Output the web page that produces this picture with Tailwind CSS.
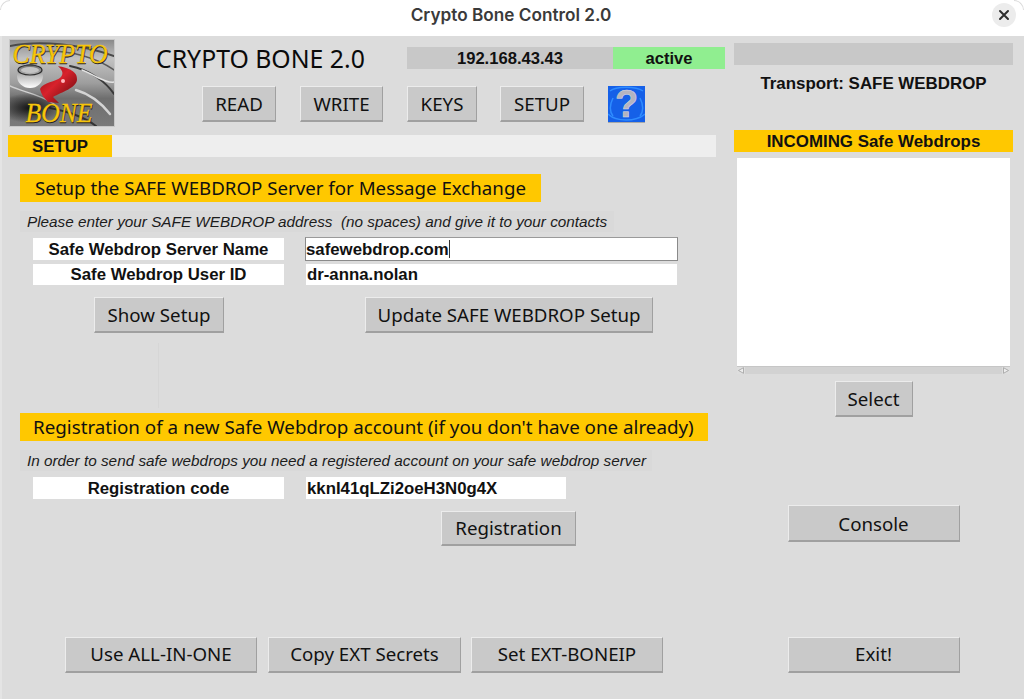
<!DOCTYPE html>
<html><head><meta charset="utf-8"><script src="https://cdn.jsdelivr.net/npm/@tailwindcss/browser@4"></script></head>
<body class="bg-white">
<div class="w-[1024px] h-[699px] overflow-hidden flex flex-col font-['Liberation_Sans',sans-serif] text-[#111]">
  <header class="h-[36px] shrink-0 relative flex items-center justify-center bg-white">
    <div class="absolute left-0 top-0 w-[10px] h-[10px] rounded-tl-[10px] border-t border-l border-[#dcdcdc]"></div>
    <div class="absolute right-0 top-0 w-[10px] h-[10px] rounded-tr-[10px] border-t border-r border-[#dcdcdc]"></div>
    <span class="font-['Inter',sans-serif] font-semibold text-[17.2px] text-[#3a3a3a] mt-[-6px] ml-[-2px]">Crypto Bone Control 2.0</span>
    <div class="absolute left-[992px] top-[3px] w-[24px] h-[24px] rounded-full bg-[#ececec] flex items-center justify-center">
      <svg width="12" height="12" viewBox="0 0 12 12"><path d="M2 2L10 10M10 2L2 10" stroke="#2e2e2e" stroke-width="2" stroke-linecap="round"/></svg>
    </div>
  </header>
  <main class="flex-1 flex bg-[#dcdcdc] border-l-2 border-[#e4e4e4]">
    <section class="w-[732px] shrink-0 relative">
      <div class="flex h-[91px] pl-[7px] pt-[3px]">
        <svg class="shrink-0 border border-[#c8c8c8]" width="106" height="88" viewBox="0 0 104 86" preserveAspectRatio="none">
          <defs>
            <linearGradient id="bg" x1="0" y1="0" x2="0" y2="1"><stop offset="0" stop-color="#8a8a8a"/><stop offset="0.22" stop-color="#c2c2c2"/><stop offset="0.5" stop-color="#9e9e9e"/><stop offset="0.68" stop-color="#6e6e6e"/><stop offset="1" stop-color="#7a7a7a"/></linearGradient>
            <linearGradient id="rib" x1="0" y1="0" x2="1" y2="1"><stop offset="0" stop-color="#8a0c12"/><stop offset="0.45" stop-color="#d8222c"/><stop offset="1" stop-color="#5a0608"/></linearGradient>
            <radialGradient id="dk" cx="0.5" cy="0.5" r="0.5"><stop offset="0" stop-color="#111"/><stop offset="1" stop-color="#111" stop-opacity="0"/></radialGradient>
            <linearGradient id="drop" x1="0" y1="0" x2="0" y2="1"><stop offset="0" stop-color="#666"/><stop offset="0.5" stop-color="#bdbdbd"/><stop offset="1" stop-color="#ffffff"/></linearGradient>
          </defs>
          <rect width="104" height="86" fill="url(#bg)"/>
          <g fill="none" stroke-linecap="round">
            <path d="M0 6C30 0 70 4 104 16" stroke="#4a4a4a" stroke-width="2"/>
            <path d="M30 12C60 8 90 20 104 30" stroke="#5a5a5a" stroke-width="1.5"/>
            <path d="M60 26C80 30 96 42 104 54" stroke="#3a3a3a" stroke-width="2"/>
            <path d="M72 30C86 36 98 44 104 42" stroke="#e2e2e2" stroke-width="1.5"/>
            <path d="M66 50C80 54 92 64 100 74" stroke="#d4d4d4" stroke-width="2.5"/>
            <path d="M40 68C60 72 76 78 86 86" stroke="#333" stroke-width="2"/>
            <path d="M0 46C12 52 30 54 44 64" stroke="#d0d0d0" stroke-width="1.5"/>
          </g>
          <ellipse cx="20" cy="68" rx="32" ry="15" fill="url(#dk)"/>
          <ellipse cx="20" cy="36" rx="13" ry="12" fill="url(#drop)"/>
          <ellipse cx="20" cy="30" rx="12" ry="5" fill="none" stroke="#2e2e2e" stroke-width="1.2"/>
          <ellipse cx="20" cy="30" rx="9" ry="3" fill="#c4c4c4"/>
          <path d="M48 26C58 28 68 31 67 40C66 48 52 52 43 57L49 63L38 62C34 58 31 54 30 49C33 42 46 42 51 37C54 33 52 30 48 26Z" fill="url(#rib)"/>
          <circle cx="53" cy="41" r="2" fill="#ffb9bd"/>
          <text x="50.5" y="24" text-anchor="middle" font-family="Liberation Serif" font-style="italic" font-size="27" textLength="95" lengthAdjust="spacingAndGlyphs" fill="#222" stroke="#222" stroke-width="0.4">CRYPTO</text>
          <text x="50" y="23" text-anchor="middle" font-family="Liberation Serif" font-style="italic" font-size="27" textLength="95" lengthAdjust="spacingAndGlyphs" fill="#f6c50a" stroke="#f6c50a" stroke-width="0.3">CRYPTO</text>
          <text x="49.5" y="82.5" text-anchor="middle" font-family="Liberation Serif" font-style="italic" font-size="27" textLength="67" lengthAdjust="spacingAndGlyphs" fill="#222" stroke="#222" stroke-width="0.4">BONE</text>
          <text x="49" y="81.5" text-anchor="middle" font-family="Liberation Serif" font-style="italic" font-size="27" textLength="67" lengthAdjust="spacingAndGlyphs" fill="#f6c50a" stroke="#f6c50a" stroke-width="0.3">BONE</text>
        </svg>
        <div class="pt-[8px]">
          <div class="flex items-center h-[22px]">
            <h1 class="w-[292px] pl-[41px] mt-[-1px] font-['Noto_Sans',sans-serif] text-[24.8px] leading-[22px] text-[#0a0a0a] whitespace-nowrap">CRYPTO BONE 2.0</h1>
            <div class="w-[206px] h-[22px] pt-[2px] bg-[#c8c8c8] flex items-center justify-center font-bold text-[16.6px]">192.168.43.43</div>
            <div class="w-[112px] h-[22px] pt-[2px] bg-[#90ee90] flex items-center justify-center font-bold text-[16.6px]">active</div>
          </div>
          <div class="flex mt-[17px] ml-[87px] font-['Noto_Sans',sans-serif] text-[18.7px]">
            <button class="w-[74px] h-[36px] pt-px bg-[#c9c9c9] border-t border-l border-t-[#ececec] border-l-[#ececec] border-r border-b-2 border-r-[#a0a0a0] border-b-[#a0a0a0]">READ</button>
            <button class="w-[83px] h-[36px] pt-px ml-[24px] bg-[#c9c9c9] border-t border-l border-t-[#ececec] border-l-[#ececec] border-r border-b-2 border-r-[#a0a0a0] border-b-[#a0a0a0]">WRITE</button>
            <button class="w-[70px] h-[36px] pt-px ml-[24px] bg-[#c9c9c9] border-t border-l border-t-[#ececec] border-l-[#ececec] border-r border-b-2 border-r-[#a0a0a0] border-b-[#a0a0a0]">KEYS</button>
            <button class="w-[84px] h-[36px] pt-px ml-[23px] bg-[#c9c9c9] border-t border-l border-t-[#ececec] border-l-[#ececec] border-r border-b-2 border-r-[#a0a0a0] border-b-[#a0a0a0]">SETUP</button>
            <div class="relative ml-[24px] w-[37px] h-[37px] shrink-0 bg-[#1560e8] border-b border-[#a8a8a8] flex items-center justify-center font-['Liberation_Sans',sans-serif] font-bold text-[38px] leading-[36px] text-[#b4b4c0] [-webkit-text-stroke:0.5px_#dcdce6]">
              <svg class="absolute inset-0" width="37" height="36" viewBox="0 0 37 36">
                <g fill="none" stroke="#2f8cff" stroke-width="1.5">
                  <path d="M0 28C8 36 28 36 37 28"/><path d="M2 5C8 0 28 0 35 5"/><path d="M32 12C36 20 35 26 32 30"/><path d="M5 12C1 20 2 26 5 30"/>
                </g>
              </svg>
              <span class="relative">?</span>
            </div>
          </div>
        </div>
      </div>
      <div class="mt-[8px] ml-[6px] w-[708px] h-[22px] bg-[#eeeeee] flex">
        <div class="w-[104px] pt-[2px] bg-[#ffc800] flex items-center justify-center font-bold text-[16.8px]">SETUP</div>
      </div>
      <div class="ml-[18px] mt-[17px] w-[521px] h-[28px] bg-[#ffc800] pl-[15px] flex items-center font-['Noto_Sans',sans-serif] text-[18.7px] whitespace-nowrap">Setup the SAFE WEBDROP Server for Message Exchange</div>
      <div class="ml-[18px] mt-[9px] w-[594px] h-[21px] pt-[2px] bg-[#d9d9d9] pl-[7px] flex items-center italic text-[15.3px] text-[#1c1c1c] whitespace-pre">Please enter your SAFE WEBDROP address  (no spaces) and give it to your contacts</div>
      <div class="flex mt-[5px] ml-[31px] h-[24px] items-center">
        <div class="w-[251px] h-[22px] pt-[2px] bg-white flex items-center justify-center font-bold text-[16.8px]">Safe Webdrop Server Name</div>
        <div class="ml-[21px] w-[373px] h-[24px] pt-[2px] bg-white border border-[#8a8a8a] border-t-[#9a9a9a] flex items-center font-bold text-[16.8px]">safewebdrop.com<span class="w-px h-[18px] mt-[-2px] bg-[#333]"></span></div>
      </div>
      <div class="flex mt-[3px] ml-[31px] h-[21px] items-center">
        <div class="w-[251px] h-[21px] bg-white flex items-center justify-center font-bold text-[16.8px]">Safe Webdrop User ID</div>
        <div class="ml-[22px] w-[371px] h-[21px] bg-white pl-[1px] flex items-center font-bold text-[16.8px]">dr-anna.nolan</div>
      </div>
      <div class="flex mt-[12px] ml-[92px] font-['Noto_Sans',sans-serif] text-[18.7px]">
        <button class="w-[130px] h-[36px] pt-px bg-[#c9c9c9] border-t border-l border-t-[#ececec] border-l-[#ececec] border-r border-b-2 border-r-[#a0a0a0] border-b-[#a0a0a0]">Show Setup</button>
        <button class="w-[288px] h-[36px] pt-px ml-[141px] bg-[#c9c9c9] border-t border-l border-t-[#ececec] border-l-[#ececec] border-r border-b-2 border-r-[#a0a0a0] border-b-[#a0a0a0]">Update SAFE WEBDROP Setup</button>
      </div>
      <div class="ml-[156px] mt-[10px] w-px h-[65px] bg-[#d6d6d6]"></div>
      <div class="ml-[18px] mt-[5px] w-[688px] h-[28px] bg-[#ffc800] pl-[13px] flex items-center font-['Noto_Sans',sans-serif] text-[18.8px] whitespace-nowrap">Registration of a new Safe Webdrop account (if you don't have one already)</div>
      <div class="ml-[18px] mt-[9px] w-[632px] h-[21px] pt-[2px] bg-[#d9d9d9] pl-[7px] flex items-center italic text-[15.3px] text-[#1c1c1c] whitespace-nowrap">In order to send safe webdrops you need a registered account on your safe webdrop server</div>
      <div class="flex mt-[6px] ml-[31px] h-[22px]">
        <div class="w-[251px] pt-[2px] bg-white flex items-center justify-center font-bold text-[16.8px]">Registration code</div>
        <div class="ml-[22px] w-[260px] pt-[2px] bg-white pl-[1px] flex items-center font-bold text-[16.8px]">kknI41qLZi2oeH3N0g4X</div>
      </div>
      <button class="block ml-[439px] mt-[12px] w-[135px] h-[35px] bg-[#c9c9c9] border-t border-l border-t-[#ececec] border-l-[#ececec] border-r border-b-2 border-r-[#a0a0a0] border-b-[#a0a0a0] font-['Noto_Sans',sans-serif] text-[18.7px]">Registration</button>
      <div class="flex mt-[91px] ml-[63px] font-['Noto_Sans',sans-serif] text-[18.7px]">
        <button class="w-[192px] h-[36px] bg-[#c9c9c9] border-t border-l border-t-[#ececec] border-l-[#ececec] border-r border-b-2 border-r-[#a0a0a0] border-b-[#a0a0a0]">Use ALL-IN-ONE</button>
        <button class="w-[193px] h-[36px] ml-[11px] bg-[#c9c9c9] border-t border-l border-t-[#ececec] border-l-[#ececec] border-r border-b-2 border-r-[#a0a0a0] border-b-[#a0a0a0]">Copy EXT Secrets</button>
        <button class="w-[192px] h-[36px] ml-[10px] bg-[#c9c9c9] border-t border-l border-t-[#ececec] border-l-[#ececec] border-r border-b-2 border-r-[#a0a0a0] border-b-[#a0a0a0]">Set EXT-BONEIP</button>
      </div>
    </section>
    <aside class="w-[279px] shrink-0 pt-[7px] flex flex-col items-center font-['Noto_Sans',sans-serif] text-[18.7px]">
      <div class="w-full h-[22px] bg-[#c8c8c8]"></div>
      <div class="h-[36px] pt-[2px] flex items-center font-['Liberation_Sans',sans-serif] font-bold text-[16.9px]">Transport: SAFE WEBDROP</div>
      <div class="w-full h-[22px] pt-[2px] mt-[29px] bg-[#ffc800] flex items-center justify-center font-['Liberation_Sans',sans-serif] font-bold text-[16.9px]">INCOMING Safe Webdrops</div>
      <div class="w-[273px] h-[208px] mt-[6px] bg-white"></div>
      <div class="w-[273px] h-[8px] bg-[#d2d2d2] border-t border-[#c6c6c6] flex justify-between">
        <svg class="shrink-0" width="8" height="7" viewBox="0 0 8 7"><rect width="8" height="7" fill="#dedede"/><path d="M6.5 .7L1.5 3.5L6.5 6.3Z" fill="#ededed" stroke="#a0a0a0" stroke-width="0.8"/></svg>
        <svg class="shrink-0" width="8" height="7" viewBox="0 0 8 7"><rect width="8" height="7" fill="#dedede"/><path d="M1.5 .7L6.5 3.5L1.5 6.3Z" fill="#ededed" stroke="#a0a0a0" stroke-width="0.8"/></svg>
      </div>
      <button class="w-[78px] h-[36px] pt-px mt-[7px] bg-[#c9c9c9] border-t border-l border-t-[#ececec] border-l-[#ececec] border-r border-b-2 border-r-[#a0a0a0] border-b-[#a0a0a0]">Select</button>
      <button class="w-[172px] h-[37px] pt-[2px] mt-[88px] bg-[#c9c9c9] border-t border-l border-t-[#ececec] border-l-[#ececec] border-r border-b-2 border-r-[#a0a0a0] border-b-[#a0a0a0]">Console</button>
      <button class="w-[172px] h-[36px] mt-[95px] bg-[#c9c9c9] border-t border-l border-t-[#ececec] border-l-[#ececec] border-r border-b-2 border-r-[#a0a0a0] border-b-[#a0a0a0]">Exit!</button>
    </aside>
  </main>
</div>
</body></html>
